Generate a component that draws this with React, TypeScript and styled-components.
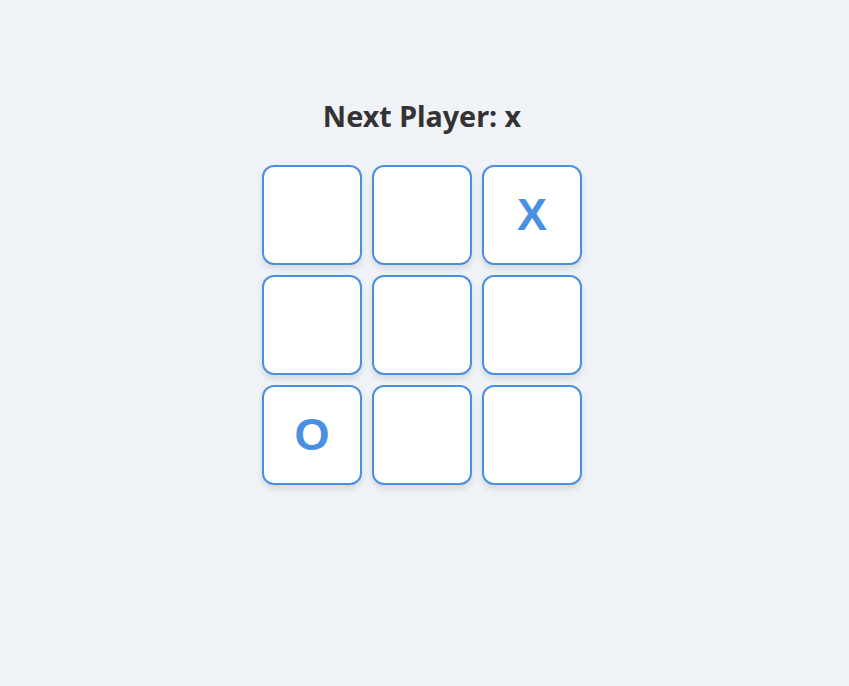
import React, { useState } from "react";
import styled, { createGlobalStyle } from "styled-components";

const GlobalStyle = createGlobalStyle`
  html, body {
    margin: 0;
    padding: 0;
    background: #eff2f7;
  }
  body {
    font-family: "Noto Sans", "Open Sans", sans-serif;
  }
`;

const Page = styled.div`
  min-height: 686px;
  display: flex;
  flex-direction: column;
  align-items: center;
  padding-top: 96px;
  padding-right: 5px;
  box-sizing: border-box;
`;

const Status = styled.h1`
  margin: 0 0 29px;
  font-size: 28.7px;
  font-weight: 700;
  color: #333333;
  line-height: 40px;
`;

const Board = styled.div`
  display: grid;
  grid-template-columns: repeat(3, 100px);
  grid-auto-rows: 100px;
  gap: 10px;
`;

const Cell = styled.button`
  width: 100px;
  height: 100px;
  box-sizing: border-box;
  border: 2px solid #4a90e2;
  border-radius: 12px;
  background: #ffffff;
  box-shadow: 0 4px 6px rgba(0, 0, 0, 0.1);
  color: #4a90e2;
  font-family: "Liberation Sans", Arial, sans-serif;
  font-size: 45px;
  font-weight: 700;
  display: flex;
  align-items: center;
  justify-content: center;
  padding: 0;
  cursor: pointer;
`;

export default function App() {
  const [squares] = useState<(string | null)[]>([
    null, null, "X",
    null, null, null,
    "O", null, null,
  ]);
  return (
    <>
      <GlobalStyle />
      <Page>
        <Status>Next Player: x</Status>
        <Board>
          {squares.map((s, i) => (
            <Cell key={i}>{s}</Cell>
          ))}
        </Board>
      </Page>
    </>
  );
}
